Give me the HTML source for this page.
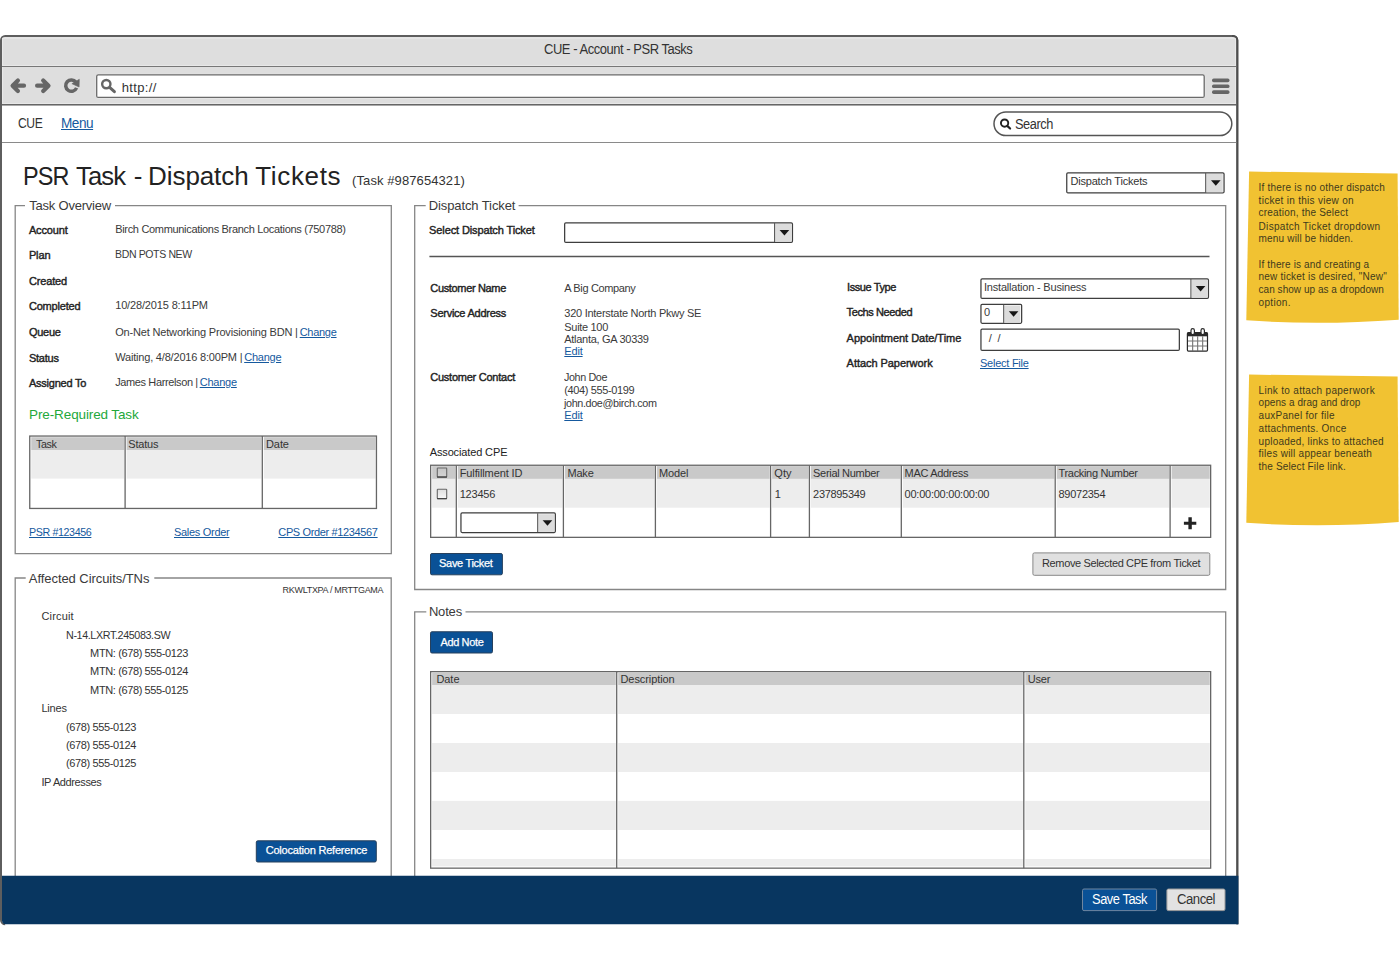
<!DOCTYPE html>
<html lang="en"><head><meta charset="utf-8"><title>CUE - Account - PSR Tasks</title>
<style>
html,body{margin:0;padding:0;background:#fff}
#page{position:relative;width:1400px;height:960px;overflow:hidden;background:#fff;font-family:"Liberation Sans",sans-serif}
#page svg{position:absolute;left:0;top:0}
.t{position:absolute;white-space:pre;line-height:1;font-weight:400;margin:0;padding:0;display:block;transform-origin:0 50%}
.B{font-weight:400;-webkit-text-stroke:0.4px currentColor}
.k{color:#333}.g{color:#3a3a3a}.b{color:#222}.hw{color:#222}h1{margin:0;padding:0;font-size:26px;font-weight:400}
.a{color:#15599e;text-decoration:underline}
.gr{color:#22a83a}.w{color:#fff;-webkit-text-stroke:0.25px #fff}.s{color:#3f3a1c}.w2{color:#fff}

</style></head>
<body>
<div id="page">
<svg width="1400" height="960" viewBox="0 0 1400 960">
<defs><linearGradient id="cb" x1="0" y1="0" x2="0" y2="1"><stop offset="0" stop-color="#dedede"/><stop offset="1" stop-color="#f8f8f8"/></linearGradient><linearGradient id="cbh" x1="0" y1="0" x2="0" y2="1"><stop offset="0" stop-color="#c6c6c6"/><stop offset="1" stop-color="#d4d4d4"/></linearGradient></defs>
<path d="M1249.1,171.6 L1397.6,173.5 L1398.7,319.7 Q1320,325.6 1246.3,320.3 Z" fill="#f1c232"/>
<path d="M1249.1,374.6 L1397.6,376.5 L1398.7,522.1 Q1320,528.2 1246.3,522.7 Z" fill="#f1c232"/>
<path d="M1,106 V40.2 a4.2,4.2 0 0 1 4.2,-4.2 H1233.1 a4.2,4.2 0 0 1 4.2,4.2 V106 Z" fill="#dedede"/>
<path d="M5.2,924.3 a4.2,4.2 0 0 1 -4.2,-4.2 V40.2 a4.2,4.2 0 0 1 4.2,-4.2 H1233.1 a4.2,4.2 0 0 1 4.2,4.2 V924.3" fill="none" stroke="#5e5e5e" stroke-width="2"/>
<path d="M2.6,104 V38 H1235.7 V104" fill="none" stroke="#ebebeb" stroke-width="1"/>
<line x1="2" x2="1236.2" y1="65.6" y2="65.6" stroke="#e9e9e9" stroke-width="1"/>
<line x1="2" x2="1236.2" y1="103.6" y2="103.6" stroke="#e9e9e9" stroke-width="1"/>
<rect x="2" y="105.5" width="1234.2" height="771" fill="#fff"/>
<path d="M1232,36 H1233.1 a4.2,4.2 0 0 1 4.2,4.2 V924.3" fill="none" stroke="#4e4e4e" stroke-width="2"/>
<line x1="2" x2="1236.2" y1="66.5" y2="66.5" stroke="#777" stroke-width="1"/>
<line x1="2" x2="1236.2" y1="104.8" y2="104.8" stroke="#666" stroke-width="1.6"/>
<line x1="2" x2="1236.2" y1="142.5" y2="142.5" stroke="#8a8a8a" stroke-width="1"/>
<rect x="96.1" y="74.3" width="1108.7" height="23.7" rx="2" fill="none" stroke="#ececec" stroke-width="1"/>
<rect x="96.7" y="74.9" width="1107.5" height="22.5" rx="1.5" fill="#fff" stroke="#6a6a6a" stroke-width="1.3"/>
<rect x="994" y="111.9" width="237.8" height="23.7" rx="11.85" fill="#fff" stroke="#555" stroke-width="1.5"/>
<path d="M115,205.7 H391.3 V553.7 H15.2 V205.7 H25" fill="none" stroke="#868686" stroke-width="1.3"/>
<path d="M154.3,578 H391.2 V880 H15.2 V578 H25.7" fill="none" stroke="#868686" stroke-width="1.3"/>
<path d="M518.6,205.7 H1225.7 V589.5 H414.7 V205.7 H425.7" fill="none" stroke="#868686" stroke-width="1.3"/>
<path d="M465.5,611.8 H1225.7 V880 H414.7 V611.8 H426.3" fill="none" stroke="#868686" stroke-width="1.3"/>
<rect x="1066.75" y="172.75" width="157.30" height="20.20" rx="1.2" fill="#fff" stroke="#3e3e3e" stroke-width="1.25"/>
<rect x="1206.20" y="174.00" width="16.50" height="18.30" fill="#dcdcdc"/>
<line x1="1205.7" x2="1205.7" y1="173.1" y2="192.60000000000002" stroke="#4a4a4a" stroke-width="1"/>
<path d="M1211.00,180.35 H1220.60 L1215.80,185.85 Z" fill="#161616"/>
<rect x="564.65" y="222.75" width="227.80" height="19.60" rx="1.2" fill="#fff" stroke="#3e3e3e" stroke-width="1.25"/>
<rect x="775.10" y="224.00" width="16.00" height="17.70" fill="#dcdcdc"/>
<line x1="774.6" x2="774.6" y1="223.1" y2="242.0" stroke="#4a4a4a" stroke-width="1"/>
<path d="M779.65,230.05 H789.25 L784.45,235.55 Z" fill="#161616"/>
<rect x="980.95" y="278.75" width="227.50" height="19.60" rx="1.2" fill="#fff" stroke="#3e3e3e" stroke-width="1.25"/>
<rect x="1191.40" y="280.00" width="15.70" height="17.70" fill="#dcdcdc"/>
<line x1="1190.9" x2="1190.9" y1="279.1" y2="298.0" stroke="#4a4a4a" stroke-width="1"/>
<path d="M1195.80,286.05 H1205.40 L1200.60,291.55 Z" fill="#161616"/>
<rect x="980.95" y="304.25" width="40.70" height="19.00" rx="1.2" fill="#fff" stroke="#3e3e3e" stroke-width="1.25"/>
<rect x="1004.20" y="305.50" width="16.10" height="17.10" fill="#dcdcdc"/>
<line x1="1003.7" x2="1003.7" y1="304.6" y2="322.90000000000003" stroke="#4a4a4a" stroke-width="1"/>
<path d="M1008.80,311.25 H1018.40 L1013.60,316.75 Z" fill="#161616"/>
<rect x="980.95" y="329.05" width="198.40" height="21.30" rx="1.2" fill="#fff" stroke="#3e3e3e" stroke-width="1.25"/>
<line x1="429.4" x2="1209.5" y1="256.5" y2="256.5" stroke="#555" stroke-width="1.5"/>
<rect x="31.25" y="437.20" width="92.95" height="12.80" fill="#c9c9c9"/>
<rect x="126.60" y="437.20" width="134.80" height="12.80" fill="#c9c9c9"/>
<rect x="263.80" y="437.20" width="111.75" height="12.80" fill="#c9c9c9"/>
<rect x="31.25" y="450.00" width="92.95" height="28.60" fill="#ededed"/>
<rect x="126.60" y="450.00" width="134.80" height="28.60" fill="#ededed"/>
<rect x="263.80" y="450.00" width="111.75" height="28.60" fill="#ededed"/>
<line x1="125.1" x2="125.1" y1="436.04999999999995" y2="508.45000000000005" stroke="#666" stroke-width="1.3"/>
<line x1="262.3" x2="262.3" y1="436.04999999999995" y2="508.45000000000005" stroke="#666" stroke-width="1.3"/>
<rect x="29.75" y="436.05" width="346.70" height="72.40" fill="none" stroke="#666" stroke-width="1.3"/>
<rect x="432.15" y="466.10" width="23.25" height="12.80" fill="#c9c9c9"/>
<rect x="457.80" y="466.10" width="104.70" height="12.80" fill="#c9c9c9"/>
<rect x="564.90" y="466.10" width="89.60" height="12.80" fill="#c9c9c9"/>
<rect x="656.90" y="466.10" width="112.80" height="12.80" fill="#c9c9c9"/>
<rect x="772.10" y="466.10" width="36.40" height="12.80" fill="#c9c9c9"/>
<rect x="810.90" y="466.10" width="89.50" height="12.80" fill="#c9c9c9"/>
<rect x="902.80" y="466.10" width="151.50" height="12.80" fill="#c9c9c9"/>
<rect x="1056.70" y="466.10" width="112.50" height="12.80" fill="#c9c9c9"/>
<rect x="1171.60" y="466.10" width="38.15" height="12.80" fill="#c9c9c9"/>
<rect x="432.15" y="478.90" width="23.25" height="28.80" fill="#ededed"/>
<rect x="457.80" y="478.90" width="104.70" height="28.80" fill="#ededed"/>
<rect x="564.90" y="478.90" width="89.60" height="28.80" fill="#ededed"/>
<rect x="656.90" y="478.90" width="112.80" height="28.80" fill="#ededed"/>
<rect x="772.10" y="478.90" width="36.40" height="28.80" fill="#ededed"/>
<rect x="810.90" y="478.90" width="89.50" height="28.80" fill="#ededed"/>
<rect x="902.80" y="478.90" width="151.50" height="28.80" fill="#ededed"/>
<rect x="1056.70" y="478.90" width="112.50" height="28.80" fill="#ededed"/>
<rect x="1171.60" y="478.90" width="38.15" height="28.80" fill="#ededed"/>
<line x1="456.3" x2="456.3" y1="465.25" y2="537.35" stroke="#666" stroke-width="1.3"/>
<line x1="563.4" x2="563.4" y1="465.25" y2="537.35" stroke="#666" stroke-width="1.3"/>
<line x1="655.4" x2="655.4" y1="465.25" y2="537.35" stroke="#666" stroke-width="1.3"/>
<line x1="770.6" x2="770.6" y1="465.25" y2="537.35" stroke="#666" stroke-width="1.3"/>
<line x1="809.4" x2="809.4" y1="465.25" y2="537.35" stroke="#666" stroke-width="1.3"/>
<line x1="901.3" x2="901.3" y1="465.25" y2="537.35" stroke="#666" stroke-width="1.3"/>
<line x1="1055.2" x2="1055.2" y1="465.25" y2="537.35" stroke="#666" stroke-width="1.3"/>
<line x1="1170.1" x2="1170.1" y1="465.25" y2="537.35" stroke="#666" stroke-width="1.3"/>
<rect x="430.65" y="465.25" width="780.00" height="72.10" fill="none" stroke="#666" stroke-width="1.3"/>
<rect x="432.15" y="672.80" width="183.65" height="12.20" fill="#c9c9c9"/>
<rect x="618.20" y="672.80" width="404.70" height="12.20" fill="#c9c9c9"/>
<rect x="1025.30" y="672.80" width="184.45" height="12.20" fill="#c9c9c9"/>
<rect x="432.15" y="685.00" width="183.65" height="29.00" fill="#ededed"/>
<rect x="618.20" y="685.00" width="404.70" height="29.00" fill="#ededed"/>
<rect x="1025.30" y="685.00" width="184.45" height="29.00" fill="#ededed"/>
<rect x="432.15" y="743.00" width="183.65" height="29.00" fill="#ededed"/>
<rect x="618.20" y="743.00" width="404.70" height="29.00" fill="#ededed"/>
<rect x="1025.30" y="743.00" width="184.45" height="29.00" fill="#ededed"/>
<rect x="432.15" y="800.90" width="183.65" height="29.10" fill="#ededed"/>
<rect x="618.20" y="800.90" width="404.70" height="29.10" fill="#ededed"/>
<rect x="1025.30" y="800.90" width="184.45" height="29.10" fill="#ededed"/>
<rect x="432.15" y="859.00" width="183.65" height="7.40" fill="#ededed"/>
<rect x="618.20" y="859.00" width="404.70" height="7.40" fill="#ededed"/>
<rect x="1025.30" y="859.00" width="184.45" height="7.40" fill="#ededed"/>
<line x1="616.7" x2="616.7" y1="671.65" y2="868.15" stroke="#666" stroke-width="1.3"/>
<line x1="1023.8" x2="1023.8" y1="671.65" y2="868.15" stroke="#666" stroke-width="1.3"/>
<rect x="430.65" y="671.65" width="780.00" height="196.50" fill="none" stroke="#666" stroke-width="1.3"/>
<rect x="460.95" y="512.95" width="94.40" height="19.60" rx="1.2" fill="#fff" stroke="#3e3e3e" stroke-width="1.25"/>
<rect x="538.20" y="514.20" width="15.80" height="17.70" fill="#dcdcdc"/>
<line x1="537.7" x2="537.7" y1="513.3" y2="532.1999999999999" stroke="#4a4a4a" stroke-width="1"/>
<path d="M542.65,520.25 H552.25 L547.45,525.75 Z" fill="#161616"/>
<rect x="437.3" y="468.00" width="9.4" height="9.10" rx="0.6" fill="url(#cbh)" stroke="#686868" stroke-width="1.1"/>
<line x1="437" x2="447" y1="477.00" y2="477.00" stroke="#444" stroke-width="1.2"/>
<rect x="437.3" y="489.20" width="9.4" height="9.50" rx="0.6" fill="url(#cb)" stroke="#686868" stroke-width="1.1"/>
<line x1="437" x2="447" y1="498.60" y2="498.60" stroke="#444" stroke-width="1.2"/>
<path d="M1188.4,517.2 h3.4 v4.5 h4.5 v3 h-4.5 v4.5 h-3.4 v-4.5 h-4.5 v-3 h4.5 z" fill="#222"/>
<rect x="256.30" y="840.80" width="120.00" height="21.20" rx="1.5" fill="#0a5196" stroke="#27405c" stroke-width="1"/>
<rect x="430.50" y="553.50" width="71.90" height="21.30" rx="1.5" fill="#0a5196" stroke="#27405c" stroke-width="1"/>
<rect x="430.50" y="631.75" width="62.00" height="21.25" rx="1.5" fill="#0a5196" stroke="#27405c" stroke-width="1"/>
<rect x="1032.90" y="552.90" width="176.90" height="22.40" rx="1.5" fill="#e0e0e0" stroke="#888" stroke-width="1"/>
<path d="M2,875.8 H1238.4 V924.3 H6 a4,4 0 0 1 -4,-4 Z" fill="#083660"/>
<rect x="1082.50" y="889.00" width="74.10" height="21.60" rx="1.5" fill="#0a5196" stroke="#6f86a0" stroke-width="1"/>
<rect x="1166.90" y="889.00" width="58.10" height="21.60" rx="1.5" fill="#e2e2e2" stroke="#9a9a9a" stroke-width="1"/>
<path d="M17.9,80.4 L12.6,85.7 L17.9,91 M13,85.7 H24" fill="none" stroke="#666" stroke-linecap="round" stroke-linejoin="round" stroke-width="4.2"/>
<path d="M43.2,80.4 L48.5,85.7 L43.2,91 M48.1,85.7 H37.1" fill="none" stroke="#666" stroke-linecap="round" stroke-linejoin="round" stroke-width="4.2"/>
<path d="M75.9,82.1 A5.7,5.7 0 1 0 76.6,87.9" fill="none" stroke="#666" stroke-width="3.5"/>
<path d="M79.3,79.3 L79.1,87 L71.9,83.7 Z" fill="#666" stroke="#666" stroke-width="0.6" stroke-linejoin="round"/>
<circle cx="106.3" cy="84.1" r="4.15" fill="none" stroke="#666" stroke-width="2.4"/>
<line x1="109.9" y1="87.7" x2="114.4" y2="91.7" stroke="#666" stroke-width="3" stroke-linecap="round"/>
<rect x="1212" y="78.50" width="17.5" height="3.7" rx="1.7" fill="#666"/>
<rect x="1212" y="84.40" width="17.5" height="3.7" rx="1.7" fill="#666"/>
<rect x="1212" y="90.30" width="17.5" height="3.7" rx="1.7" fill="#666"/>
<circle cx="1004.6" cy="123.1" r="3.65" fill="none" stroke="#222" stroke-width="1.9"/>
<line x1="1007.5" y1="126.1" x2="1010.1" y2="128.5" stroke="#222" stroke-width="2.2" stroke-linecap="round"/>
<g>
<rect x="1187.4" y="332.7" width="20.1" height="18.4" rx="1" fill="#fff" stroke="#2a2a2a" stroke-width="1.2"/>
<rect x="1187.4" y="332.7" width="20.1" height="3.6" fill="#2a2a2a"/>
<line x1="1192.7" x2="1192.7" y1="336.3" y2="351" stroke="#666" stroke-width="1"/>
<line x1="1197.7" x2="1197.7" y1="336.3" y2="351" stroke="#666" stroke-width="1"/>
<line x1="1202.7" x2="1202.7" y1="336.3" y2="351" stroke="#666" stroke-width="1"/>
<line x1="1188" x2="1207" y1="341" y2="341" stroke="#777" stroke-width="1"/>
<line x1="1188" x2="1207" y1="346" y2="346" stroke="#777" stroke-width="1"/>
<rect x="1191.0" y="328.7" width="3.4" height="6" rx="1.7" fill="#fff" stroke="#2a2a2a" stroke-width="1.2"/>
<rect x="1201.0" y="328.7" width="3.4" height="6" rx="1.7" fill="#fff" stroke="#2a2a2a" stroke-width="1.2"/>
</g>
</svg>
<div id="text">
<section class="browser-chrome">
<span class="t k" style="left:544.3px;top:42px;font-size:14px;letter-spacing:-0.49px;transform:scaleX(0.926)">CUE - Account - PSR Tasks</span>
<span class="t k" style="left:121.7px;top:81px;font-size:13px;letter-spacing:0.34px">http://</span>
<span class="t k" style="left:17.6px;top:116px;font-size:14px;letter-spacing:-0.49px;transform:scaleX(0.865)">CUE</span>
<a href="#" class="t a" style="left:60.9px;top:116px;font-size:14px;letter-spacing:-0.49px;transform:scaleX(0.971)">Menu</a>
<span class="t k" style="left:1015.1px;top:117px;font-size:14px;letter-spacing:-0.49px;transform:scaleX(0.913)">Search</span>
</section>
<section class="page-header">
<h1>
<span class="t hw" style="left:23.1px;top:163px;font-size:26px;letter-spacing:-0.91px;transform:scaleX(0.901)">PSR </span>
<span class="t hw" style="left:75.7px;top:163px;font-size:26px;letter-spacing:-0.91px;transform:scaleX(0.987)">Task </span>
<span class="t hw" style="left:133.7px;top:163px;font-size:26px;letter-spacing:-1.77px">- </span>
<span class="t hw" style="left:148.1px;top:163px;font-size:26px;letter-spacing:-0.09px">Dispatch </span>
<span class="t hw" style="left:255.3px;top:163px;font-size:26px;letter-spacing:0.64px">Tickets </span>
</h1>
<span class="t k" style="left:352.1px;top:174px;font-size:13px;letter-spacing:0.09px">(Task #987654321)</span>
<span class="t k" style="left:1070.4px;top:176px;font-size:11px;letter-spacing:-0.19px">Dispatch Tickets</span>
</section>
<section class="task-overview">
<span class="t g" style="left:29.2px;top:199px;font-size:13px;letter-spacing:-0.21px">Task Overview</span>
<b class="t b B" style="left:28.9px;top:225px;font-size:11px;letter-spacing:-0.13px">Account</b>
<b class="t b B" style="left:28.9px;top:250px;font-size:11px;letter-spacing:-0.11px">Plan</b>
<b class="t b B" style="left:28.9px;top:276px;font-size:11px;letter-spacing:-0.15px">Created</b>
<b class="t b B" style="left:28.9px;top:301px;font-size:11px;letter-spacing:-0.18px">Completed</b>
<b class="t b B" style="left:28.9px;top:327px;font-size:11px;letter-spacing:-0.24px">Queue</b>
<b class="t b B" style="left:28.9px;top:353px;font-size:11px;letter-spacing:-0.22px">Status</b>
<b class="t b B" style="left:28.9px;top:378px;font-size:11px;letter-spacing:-0.22px">Assigned To</b>
<span class="t g" style="left:115.2px;top:224px;font-size:11px;letter-spacing:-0.32px">Birch Communications Branch Locations (750788)</span>
<span class="t g" style="left:115.2px;top:249px;font-size:11px;letter-spacing:-0.39px;transform:scaleX(0.957)">BDN POTS NEW</span>
<span class="t g" style="left:115.2px;top:300px;font-size:11px;letter-spacing:-0.15px">10/28/2015 8:11PM</span>
<span class="t g" style="left:115.2px;top:327px;font-size:11px;letter-spacing:-0.17px">On-Net Networking Provisioning BDN |</span>
<a href="#" class="t a" style="left:299.7px;top:327px;font-size:11px;letter-spacing:-0.28px">Change</a>
<span class="t g" style="left:115.2px;top:352px;font-size:11px;letter-spacing:-0.19px">Waiting, 4/8/2016 8:00PM |</span>
<a href="#" class="t a" style="left:244.2px;top:352px;font-size:11px;letter-spacing:-0.24px">Change</a>
<span class="t g" style="left:115.2px;top:377px;font-size:11px;letter-spacing:-0.38px">James Harrelson |</span>
<a href="#" class="t a" style="left:199.7px;top:377px;font-size:11px;letter-spacing:-0.24px">Change</a>
<span class="t gr" style="left:29.1px;top:408px;font-size:13.5px;letter-spacing:-0.12px">Pre-Required Task</span>
<span class="t k" style="left:36.0px;top:439px;font-size:11px;letter-spacing:-0.39px;transform:scaleX(0.977)">Task</span>
<span class="t k" style="left:128.3px;top:439px;font-size:11px;letter-spacing:-0.20px">Status</span>
<span class="t k" style="left:266.0px;top:439px;font-size:11px;letter-spacing:-0.09px">Date</span>
<a href="#" class="t a" style="left:28.8px;top:527px;font-size:11px;letter-spacing:-0.39px;transform:scaleX(0.971)">PSR #123456</a>
<a href="#" class="t a" style="left:174.0px;top:527px;font-size:11px;letter-spacing:-0.30px">Sales Order</a>
<a href="#" class="t a" style="left:278.3px;top:527px;font-size:11px;letter-spacing:-0.36px">CPS Order #1234567</a>
</section>
<section class="affected-circuits">
<span class="t g" style="left:28.8px;top:572px;font-size:13px;letter-spacing:-0.06px">Affected Circuits/TNs</span>
<span class="t k" style="left:282.6px;top:586px;font-size:9px;letter-spacing:-0.31px">RKWLTXPA / MRTTGAMA</span>
<span class="t k" style="left:41.4px;top:611px;font-size:11px;letter-spacing:0.18px">Circuit</span>
<span class="t k" style="left:65.9px;top:630px;font-size:11px;letter-spacing:-0.39px;transform:scaleX(0.977)">N-14.LXRT.245083.SW</span>
<span class="t k" style="left:90.1px;top:648px;font-size:11px;letter-spacing:-0.38px">MTN: (678) 555-0123</span>
<span class="t k" style="left:90.1px;top:666px;font-size:11px;letter-spacing:-0.38px">MTN: (678) 555-0124</span>
<span class="t k" style="left:90.1px;top:685px;font-size:11px;letter-spacing:-0.38px">MTN: (678) 555-0125</span>
<span class="t k" style="left:41.4px;top:703px;font-size:11px;letter-spacing:-0.18px">Lines</span>
<span class="t k" style="left:65.9px;top:722px;font-size:11px;letter-spacing:-0.37px">(678) 555-0123</span>
<span class="t k" style="left:65.9px;top:740px;font-size:11px;letter-spacing:-0.37px">(678) 555-0124</span>
<span class="t k" style="left:65.9px;top:758px;font-size:11px;letter-spacing:-0.37px">(678) 555-0125</span>
<span class="t k" style="left:41.4px;top:777px;font-size:11px;letter-spacing:-0.38px">IP Addresses</span>
<span class="t w" style="left:265.7px;top:845px;font-size:11px;letter-spacing:-0.21px">Colocation Reference</span>
</section>
<section class="dispatch-ticket">
<span class="t g" style="left:428.7px;top:199px;font-size:13px;letter-spacing:-0.10px">Dispatch Ticket</span>
<b class="t b B" style="left:429.1px;top:225px;font-size:11px;letter-spacing:-0.12px">Select Dispatch Ticket</b>
<b class="t b B" style="left:430.3px;top:283px;font-size:11px;letter-spacing:-0.34px">Customer Name</b>
<span class="t g" style="left:564.3px;top:283px;font-size:11px;letter-spacing:-0.36px">A Big Company</span>
<b class="t b B" style="left:430.3px;top:308px;font-size:11px;letter-spacing:-0.25px">Service Address</b>
<span class="t g" style="left:564.3px;top:308px;font-size:11px;letter-spacing:-0.27px">320 Interstate North Pkwy SE</span>
<span class="t g" style="left:564.3px;top:322px;font-size:11px;letter-spacing:-0.31px">Suite 100</span>
<span class="t g" style="left:564.3px;top:334px;font-size:11px;letter-spacing:-0.29px">Atlanta, GA 30339</span>
<a href="#" class="t a" style="left:564.3px;top:346px;font-size:11px;letter-spacing:-0.17px">Edit</a>
<b class="t b B" style="left:430.3px;top:372px;font-size:11px;letter-spacing:-0.25px">Customer Contact</b>
<span class="t g" style="left:564.3px;top:372px;font-size:11px;letter-spacing:-0.39px;transform:scaleX(0.979)">John Doe</span>
<span class="t g" style="left:564.3px;top:385px;font-size:11px;letter-spacing:-0.37px">(404) 555-0199</span>
<span class="t g" style="left:564.3px;top:398px;font-size:11px;letter-spacing:-0.39px;transform:scaleX(0.984)">john.doe@birch.com</span>
<a href="#" class="t a" style="left:564.3px;top:410px;font-size:11px;letter-spacing:-0.17px">Edit</a>
<b class="t b B" style="left:846.6px;top:282px;font-size:11px;letter-spacing:-0.39px;transform:scaleX(0.999)">Issue Type</b>
<span class="t g" style="left:984.0px;top:282px;font-size:11px;letter-spacing:-0.20px">Installation - Business</span>
<b class="t b B" style="left:846.6px;top:307px;font-size:11px;letter-spacing:-0.39px;transform:scaleX(1.000)">Techs Needed</b>
<span class="t g" style="left:984.0px;top:307px;font-size:11px;letter-spacing:0.68px">0</span>
<b class="t b B" style="left:846.6px;top:333px;font-size:11px;letter-spacing:-0.02px">Appointment Date/Time</b>
<span class="t g" style="left:988.8px;top:333px;font-size:11px;letter-spacing:1.24px">/ /</span>
<b class="t b B" style="left:846.6px;top:358px;font-size:11px;letter-spacing:-0.05px">Attach Paperwork</b>
<a href="#" class="t a" style="left:980.0px;top:358px;font-size:11px;letter-spacing:-0.25px">Select File</a>
<span class="t b" style="left:429.7px;top:447px;font-size:11px;letter-spacing:-0.13px">Associated CPE</span>
<span class="t k" style="left:459.7px;top:468px;font-size:11px;letter-spacing:-0.11px">Fulfillment ID</span>
<span class="t k" style="left:567.4px;top:468px;font-size:11px;letter-spacing:-0.15px">Make</span>
<span class="t k" style="left:659.1px;top:468px;font-size:11px;letter-spacing:-0.15px">Model</span>
<span class="t k" style="left:774.3px;top:468px;font-size:11px;letter-spacing:0.09px">Qty</span>
<span class="t k" style="left:813.1px;top:468px;font-size:11px;letter-spacing:-0.31px">Serial Number</span>
<span class="t k" style="left:904.6px;top:468px;font-size:11px;letter-spacing:-0.33px">MAC Address</span>
<span class="t k" style="left:1058.5px;top:468px;font-size:11px;letter-spacing:-0.32px">Tracking Number</span>
<span class="t k" style="left:459.7px;top:489px;font-size:11px;letter-spacing:-0.20px">123456</span>
<span class="t k" style="left:774.8px;top:489px;font-size:11px;letter-spacing:-1.63px">1</span>
<span class="t k" style="left:813.1px;top:489px;font-size:11px;letter-spacing:-0.32px">237895349</span>
<span class="t k" style="left:904.6px;top:489px;font-size:11px;letter-spacing:-0.24px">00:00:00:00:00:00</span>
<span class="t k" style="left:1058.5px;top:489px;font-size:11px;letter-spacing:-0.27px">89072354</span>
<span class="t w" style="left:439.1px;top:558px;font-size:11px;letter-spacing:-0.31px">Save Ticket</span>
<span class="t k" style="left:1042.0px;top:558px;font-size:11px;letter-spacing:-0.36px">Remove Selected CPE from Ticket</span>
</section>
<section class="notes">
<span class="t g" style="left:428.9px;top:605px;font-size:13px;letter-spacing:-0.17px">Notes</span>
<span class="t w" style="left:440.4px;top:637px;font-size:11px;letter-spacing:-0.35px">Add Note</span>
<span class="t k" style="left:436.4px;top:674px;font-size:11px;letter-spacing:-0.04px">Date</span>
<span class="t k" style="left:620.5px;top:674px;font-size:11px;letter-spacing:-0.08px">Description</span>
<span class="t k" style="left:1027.7px;top:674px;font-size:11px;letter-spacing:-0.18px">User</span>
</section>
<section class="footer-actions">
<span class="t w2" style="left:1092.3px;top:892px;font-size:14px;letter-spacing:-0.49px;transform:scaleX(0.919)">Save Task</span>
<span class="t k" style="left:1177.4px;top:892px;font-size:14px;letter-spacing:-0.49px;transform:scaleX(0.937)">Cancel</span>
</section>
<section class="annotations">
<span class="t s" style="left:1258.6px;top:183px;font-size:10px;letter-spacing:0.20px">If there is no other dispatch</span>
<span class="t s" style="left:1258.6px;top:196px;font-size:10px;letter-spacing:0.29px">ticket in this view on</span>
<span class="t s" style="left:1258.6px;top:208px;font-size:10px;letter-spacing:0.20px">creation, the Select</span>
<span class="t s" style="left:1258.6px;top:222px;font-size:10px;letter-spacing:0.30px">Dispatch Ticket dropdown</span>
<span class="t s" style="left:1258.6px;top:234px;font-size:10px;letter-spacing:0.17px">menu will be hidden.</span>
<span class="t s" style="left:1258.6px;top:260px;font-size:10px;letter-spacing:0.13px">If there is and creating a</span>
<span class="t s" style="left:1258.6px;top:272px;font-size:10px;letter-spacing:0.20px">new ticket is desired, "New"</span>
<span class="t s" style="left:1258.6px;top:285px;font-size:10px;letter-spacing:0.03px">can show up as a dropdown</span>
<span class="t s" style="left:1258.6px;top:298px;font-size:10px;letter-spacing:0.30px">option.</span>
<span class="t s" style="left:1258.6px;top:386px;font-size:10px;letter-spacing:0.31px">Link to attach paperwork</span>
<span class="t s" style="left:1258.6px;top:398px;font-size:10px;letter-spacing:0.06px">opens a drag and drop</span>
<span class="t s" style="left:1258.6px;top:411px;font-size:10px;letter-spacing:0.26px">auxPanel for file</span>
<span class="t s" style="left:1258.6px;top:424px;font-size:10px;letter-spacing:0.23px">attachments. Once</span>
<span class="t s" style="left:1258.6px;top:437px;font-size:10px;letter-spacing:0.23px">uploaded, links to attached</span>
<span class="t s" style="left:1258.6px;top:449px;font-size:10px;letter-spacing:0.25px">files will appear beneath</span>
<span class="t s" style="left:1258.6px;top:462px;font-size:10px;letter-spacing:0.16px">the Select File link.</span>
</section>
</div>
</div>
</body></html>
